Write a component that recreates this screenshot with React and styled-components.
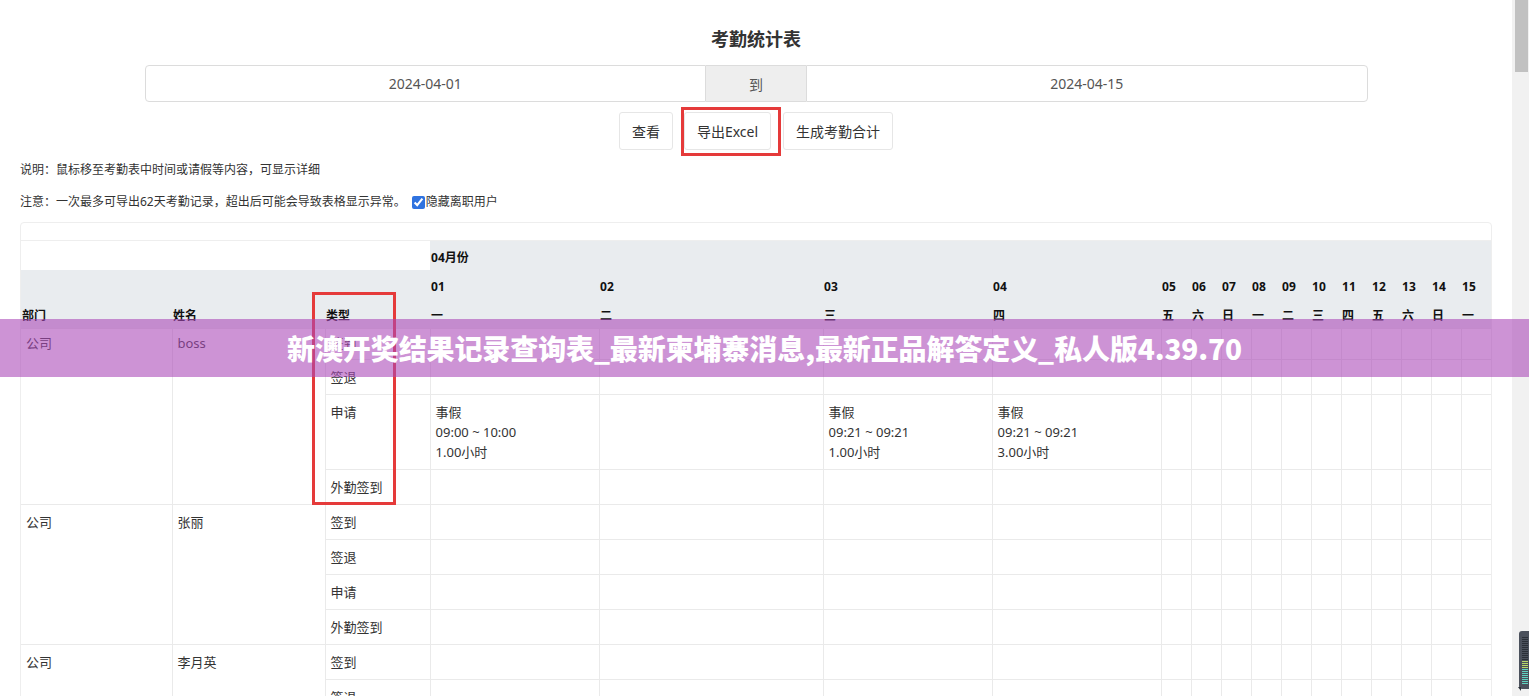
import React from 'react'
import styled, { createGlobalStyle } from 'styled-components'

const GlobalStyle = createGlobalStyle`
  html, body {
    margin: 0;
    padding: 0;
    background: #fff;
    overflow: hidden;
  }
  body {
    font-family: "Noto Sans", "Noto Sans CJK SC", sans-serif;
    color: #333;
  }
  * { box-sizing: border-box; }
`

const Page = styled.div`
  position: relative;
  display: flex;
  height: 100vh;
  overflow: hidden;
`
const Main = styled.div`
  flex: 1;
  min-width: 0;
  overflow: hidden;
`
const Title = styled.h1`
  margin: 0;
  padding: 27px 0 14px;
  text-align: center;
  font-size: 18px;
  line-height: 24px;
  font-weight: 700;
  color: #333;
`
const DateGroup = styled.div`
  display: flex;
  width: 1223px;
  height: 37px;
  margin: 0 auto;
`
const DateInput = styled.div`
  flex: 1;
  display: flex;
  align-items: center;
  justify-content: center;
  border: 1px solid #dcdcdc;
  border-radius: ${p => (p.$side === 'left' ? '4px 0 0 4px' : '0 4px 4px 0')};
  font-size: 14px;
  color: #555;
`
const Addon = styled.div`
  width: 100px;
  display: flex;
  align-items: center;
  justify-content: center;
  background: #eee;
  border-top: 1px solid #dcdcdc;
  border-bottom: 1px solid #dcdcdc;
  font-size: 14px;
  color: #555;
`
const Actions = styled.div`
  display: flex;
  justify-content: center;
  align-items: center;
  gap: 8px;
  margin-top: 10px;
`
const Button = styled.button`
  height: 38px;
  padding: 0 12px;
  border: 1px solid #e6e6e6;
  border-radius: 3px;
  background: #fff;
  font-family: inherit;
  font-size: 14px;
  color: #333;
  white-space: nowrap;
`
const Highlight = styled.div`
  display: flex;
  border: 3px solid #e53a3a;
  padding: 2px 7px 3px 0;
  margin: -5px -6px -6px 0;
`
const Notes = styled.div`
  padding: 0 20px;
  font-size: 12px;
  color: #333;
`
const Note = styled.div`
  display: flex;
  align-items: center;
  line-height: 20px;
  margin-top: ${p => p.$gap}px;
  white-space: nowrap;
`
const Check = styled.input`
  width: 13px;
  height: 13px;
  margin: 0 1px 0 6px;
  accent-color: #2f73e0;
`
const Card = styled.div`
  position: relative;
  margin: 10px 20px 0;
  padding-top: 17px;
  border: 1px solid #eee;
  border-radius: 4px;
`
const Table = styled.table`
  width: 100%;
  border-collapse: collapse;
  table-layout: fixed;
  border-top: 1px solid #eee;
`
const Head = styled.th`
  background: ${p => (p.$blank ? '#fff' : '#e9ecef')};
  text-align: left;
  vertical-align: bottom;
  font-size: 12px;
  font-weight: 700;
  line-height: 20px;
  color: #111;
  padding: 7px 1px 2px;
  white-space: nowrap;
  overflow: hidden;
`
const BodyRow = styled.tr`
  ${p => p.$first && `
    td { padding-top: 4px; padding-bottom: 6px; }
  `}
`
const Cell = styled.td`
  border: 1px solid #eaeaea;
  border-left: ${p => (p.$edge ? 'none' : '1px solid #eaeaea')};
  padding: 7px 5px;
  font-size: 13px;
  line-height: 20px;
  color: #333;
  vertical-align: top;
  white-space: nowrap;
  overflow: hidden;
  &:last-child { border-right: none; }
`
const ColumnMark = styled.div`
  position: absolute;
  left: 291px;
  top: 69px;
  width: 84px;
  height: 213px;
  border: 3px solid #e53a3a;
  pointer-events: none;
`
const Banner = styled.div`
  position: absolute;
  left: 0;
  right: 0;
  top: 319px;
  height: 58px;
  display: flex;
  align-items: center;
  justify-content: center;
  background: rgba(170, 72, 184, 0.59);
  color: #fff;
  font-family: "Noto Sans CJK SC", "Noto Sans", sans-serif;
  font-size: 28px;
  font-weight: 900;
  letter-spacing: -0.1px;
  white-space: nowrap;
`
const Scrollbar = styled.div`
  width: 17px;
  flex: none;
  background: #f1f1f1;
  display: flex;
  flex-direction: column;
`
const Thumb = styled.div`
  height: 72px;
  margin: 0 1px 0 3px;
  background: #c1c1c1;
`
const Widget = styled.div`
  position: absolute;
  right: 0;
  top: 631px;
  width: 11px;
  height: 60px;
`

const days = [
  ['01', '一', 169], ['02', '二', 224], ['03', '三', 169], ['04', '四', 169],
  ['05', '五', 30], ['06', '六', 30], ['07', '日', 30], ['08', '一', 30],
  ['09', '二', 30], ['10', '三', 30], ['11', '四', 30], ['12', '五', 30],
  ['13', '六', 30], ['14', '日', 30], ['15', '一', 30],
]

const types = ['签到', '签退', '申请', '外勤签到']

const staff = [
  {
    dept: '公司',
    name: 'boss',
    leave: {
      0: ['事假', '09:00 ~ 10:00', '1.00小时'],
      2: ['事假', '09:21 ~ 09:21', '1.00小时'],
      3: ['事假', '09:21 ~ 09:21', '3.00小时'],
    },
  },
  { dept: '公司', name: '张丽', leave: {} },
  { dept: '公司', name: '李月英', leave: {} },
]

function Meter() {
  const bars = []
  for (let i = 0; i < 24; i++) {
    const color = i < 12 ? '#2b3038' : i < 16 ? '#b6d86a' : '#5fd3c0'
    bars.push(<rect key={i} x="4" y={6 + i * 2} width="6" height="1" fill={color} />)
  }
  return (
    <svg width="11" height="60" viewBox="0 0 11 60">
      <rect x="1" y="0" width="12" height="58" rx="3" fill="#4b515c" />
      {bars}
      <path d="M0 56 L3 56 L3 60 Z" fill="#2b3038" />
    </svg>
  )
}

function StaffRows({ person, first }) {
  return types.map((t, ti) => (
    <BodyRow key={t} $first={first && ti === 0}>
      {ti === 0 && (
        <>
          <Cell $edge rowSpan={4}>{person.dept}</Cell>
          <Cell rowSpan={4}>{person.name}</Cell>
        </>
      )}
      <Cell>{t}</Cell>
      {days.map((d, di) => {
        const info = t === '申请' ? person.leave[di] : null
        return (
          <Cell key={d[0]}>
            {info && info.map((line, li) => <div key={li}>{line}</div>)}
          </Cell>
        )
      })}
    </BodyRow>
  ))
}

export default function App() {
  return (
    <Page>
      <GlobalStyle />
      <Main>
        <Title>考勤统计表</Title>
        <DateGroup>
          <DateInput $side="left">2024-04-01</DateInput>
          <Addon>到</Addon>
          <DateInput $side="right">2024-04-15</DateInput>
        </DateGroup>
        <Actions>
          <Button>查看</Button>
          <Highlight>
            <Button>导出Excel</Button>
          </Highlight>
          <Button>生成考勤合计</Button>
        </Actions>
        <Notes>
          <Note $gap={10}>说明：鼠标移至考勤表中时间或请假等内容，可显示详细</Note>
          <Note $gap={12}>
            注意：一次最多可导出62天考勤记录，超出后可能会导致表格显示异常。
            <Check type="checkbox" defaultChecked />
            隐藏离职用户
          </Note>
        </Notes>
        <Card>
          <Table>
            <colgroup>
              <col style={{ width: 151 }} />
              <col style={{ width: 153 }} />
              <col style={{ width: 105 }} />
              {days.map(d => <col key={d[0]} style={{ width: d[2] }} />)}
            </colgroup>
            <thead>
              <tr>
                <Head $blank colSpan={3} />
                <Head colSpan={15}>04月份</Head>
              </tr>
              <tr>
                <Head rowSpan={2}>部门</Head>
                <Head rowSpan={2}>姓名</Head>
                <Head rowSpan={2}>类型</Head>
                {days.map(d => <Head key={d[0]}>{d[0]}</Head>)}
              </tr>
              <tr>
                {days.map(d => <Head key={d[0]}>{d[1]}</Head>)}
              </tr>
            </thead>
            <tbody>
              {staff.map((p, i) => <StaffRows key={p.name} person={p} first={i === 0} />)}
            </tbody>
          </Table>
          <ColumnMark />
        </Card>
      </Main>
      <Scrollbar>
        <Thumb />
      </Scrollbar>
      <Banner>新澳开奖结果记录查询表_最新柬埔寨消息,最新正品解答定义_私人版4.39.70</Banner>
      <Widget>
        <Meter />
      </Widget>
    </Page>
  )
}
